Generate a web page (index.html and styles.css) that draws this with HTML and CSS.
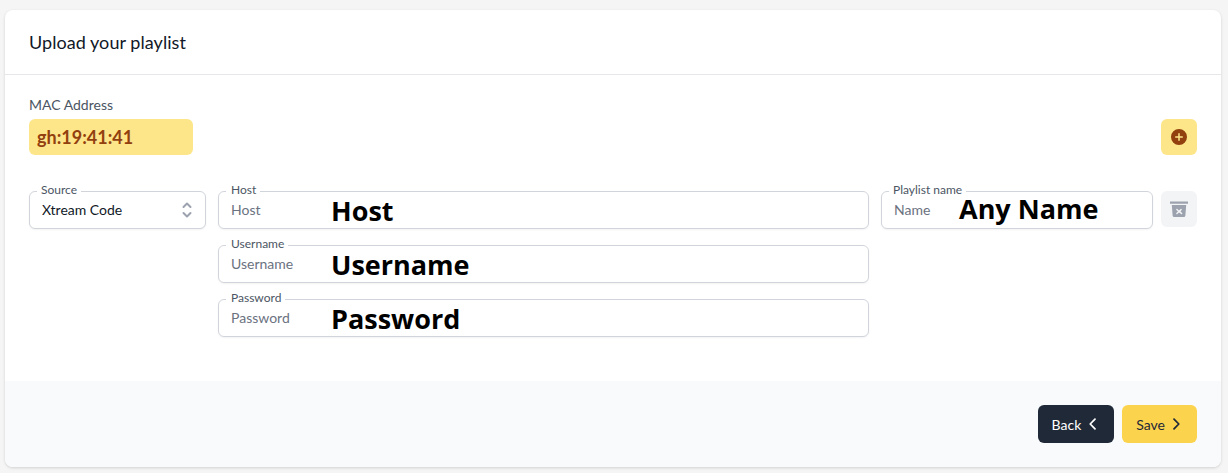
FILE: index.html
```html
<!DOCTYPE html>
<html lang="en">

<head>
    <meta charset="UTF-8">
    <meta name="viewport" content="width=device-width, initial-scale=1.0">
    <title>Upload your playlist</title>
    <link rel="stylesheet" href="styles.css">
</head>

<body>
    <div class="card">
        <div class="card-header">
            <h2 class="card-title">Upload your playlist</h2>
        </div>

        <div class="card-body">
            <div class="mac-label">MAC Address</div>
            <div class="mac-row">
                <div class="mac-value">gh:19:41:41</div>
                <button class="icon-btn add-btn" aria-label="Add playlist">
                    <svg width="20" height="20" viewBox="0 0 20 20" fill="currentColor">
                        <path fill-rule="evenodd" clip-rule="evenodd" d="M10 18a8 8 0 100-16 8 8 0 000 16zm.75-11.25a.75.75 0 00-1.5 0v2.5h-2.5a.75.75 0 000 1.5h2.5v2.5a.75.75 0 001.5 0v-2.5h2.5a.75.75 0 000-1.5h-2.5v-2.5z" />
                    </svg>
                </button>
            </div>

            <div class="playlist-row">
                <div class="field source-field">
                    <span class="field-label">Source</span>
                    <select class="field-select">
                        <option>Xtream Code</option>
                    </select>
                    <svg class="select-arrows" width="20" height="20" viewBox="0 0 20 20" fill="none" stroke="currentColor" stroke-width="2" stroke-linecap="round" stroke-linejoin="round">
                        <path d="M6.5 7 10 3.5 13.5 7" />
                        <path d="M6.5 13 10 16.5 13.5 13" />
                    </svg>
                </div>

                <div class="credentials">
                    <div class="field">
                        <span class="field-label">Host</span>
                        <input class="field-input" placeholder="Host">
                        <span class="note">Host</span>
                    </div>
                    <div class="field">
                        <span class="field-label">Username</span>
                        <input class="field-input" placeholder="Username">
                        <span class="note">Username</span>
                    </div>
                    <div class="field">
                        <span class="field-label">Password</span>
                        <input class="field-input" placeholder="Password">
                        <span class="note">Password</span>
                    </div>
                </div>

                <div class="field name-field">
                    <span class="field-label">Playlist name</span>
                    <input class="field-input" placeholder="Name">
                    <span class="note name-note">Any Name</span>
                </div>

                <button class="icon-btn trash-btn" aria-label="Remove playlist">
                    <svg width="20" height="20" viewBox="0 0 20 20" fill="currentColor">
                        <path d="M1 2.5h18v2.2H1z" />
                        <path fill-rule="evenodd" clip-rule="evenodd" d="M2.8 6h14.4l-.8 10.4a1.7 1.7 0 01-1.7 1.6H5.3a1.7 1.7 0 01-1.7-1.6L2.8 6zm4.6 3.9a.7.7 0 011 0l1.6 1.6 1.6-1.6a.7.7 0 111 1L11.500 12.500l1.600 1.600a.7.7 0 11-1 1L10 13.500l-1.600 1.600a.7.7 0 01-1-1l1.600-1.600-1.600-1.600a.7.7 0 010-1z" />
                    </svg>
                </button>
            </div>
        </div>

        <div class="card-footer">
            <button class="btn back-btn">Back
                <svg width="16" height="16" viewBox="0 0 20 20" fill="none" stroke="currentColor" stroke-width="2.2" stroke-linecap="round" stroke-linejoin="round">
                    <path d="M12.5 4 6.500 10l6 6" />
                </svg>
            </button>
            <button class="btn save-btn">Save
                <svg width="16" height="16" viewBox="0 0 20 20" fill="none" stroke="currentColor" stroke-width="2.2" stroke-linecap="round" stroke-linejoin="round">
                    <path d="M7.500 4l6 6-6 6" />
                </svg>
            </button>
        </div>
    </div>
</body>

</html>
```

FILE: styles.css
```css
* {
    box-sizing: border-box;
}

body {
    font-family: "Lato", "Noto Sans", sans-serif;
    background-color: #f5f5f5;
    margin: 0;
    padding: 10px 7px 6px 5px;
    color: #1f2937;
}

button,
input,
select {
    font-family: inherit;
}

.card {
    background-color: #fff;
    border-radius: 8px;
    box-shadow: 0 1px 3px rgba(0, 0, 0, 0.15);
    overflow: hidden;
}

.card-header {
    height: 65px;
    padding: 0 24px;
    display: flex;
    align-items: center;
    border-bottom: 1px solid #e5e7eb;
}

.card-title {
    margin: 0;
    font-size: 18px;
    font-weight: 400;
    letter-spacing: 0.05px;
    color: #111827;
}

.card-body {
    height: 306px;
    padding: 21px 24px 0;
}

.mac-label {
    font-size: 14px;
    line-height: 18px;
    color: #4b5563;
    margin-bottom: 5px;
}

.mac-row {
    display: flex;
    justify-content: space-between;
    margin-bottom: 36px;
}

.mac-value {
    width: 164px;
    height: 36px;
    padding: 0 8px;
    display: flex;
    align-items: center;
    border-radius: 6px;
    background-color: #fde68a;
    color: #92400e;
    font-size: 18px;
    font-weight: 700;
}

.icon-btn {
    width: 36px;
    height: 36px;
    padding: 0;
    border: none;
    border-radius: 6px;
    display: flex;
    align-items: center;
    justify-content: center;
    flex-shrink: 0;
}

.add-btn {
    background-color: #fde68a;
    color: #92400e;
}

.trash-btn {
    background-color: #f3f4f6;
    color: #9ca3af;
    margin-left: -4px;
}

.playlist-row {
    display: flex;
    align-items: flex-start;
    gap: 12px;
}

.credentials {
    width: 651px;
    display: flex;
    flex-direction: column;
    gap: 16px;
}

.credentials .field-label {
    padding-left: 5px;
}

.field {
    position: relative;
    height: 38px;
    border: 1px solid #d1d5db;
    border-radius: 6px;
    background-color: #fff;
    box-shadow: 0 1px 2px rgba(0, 0, 0, 0.05);
}

.source-field {
    width: 177px;
    flex-shrink: 0;
}

.name-field {
    width: 272px;
    flex-shrink: 0;
}

.field-label {
    position: absolute;
    left: 7px;
    top: -9px;
    padding: 0 4px;
    background-color: #fff;
    font-size: 12px;
    line-height: 14px;
    color: #4b5563;
}

.field-input,
.field-select {
    width: 100%;
    height: 100%;
    border: none;
    outline: none;
    background: transparent;
    padding: 0 12px 2px;
    font-size: 14px;
    color: #111827;
}

.field-select {
    appearance: none;
}

.field-input::placeholder {
    color: #6b7280;
    opacity: 1;
}

.select-arrows {
    position: absolute;
    right: 8px;
    top: 8px;
    color: #9ca3af;
    pointer-events: none;
}

.note {
    position: absolute;
    left: 112px;
    top: 1px;
    font-family: "Open Sans", sans-serif;
    font-size: 27px;
    line-height: 36px;
    font-weight: 700;
    color: #000;
    pointer-events: none;
}

.name-note {
    left: 77px;
    top: -1px;
}

.card-footer {
    height: 86px;
    padding: 0 24px;
    display: flex;
    align-items: center;
    justify-content: flex-end;
    gap: 8px;
    background-color: #f9fafb;
}

.btn {
    height: 38px;
    border: none;
    border-radius: 6px;
    padding: 0 13px 0 14px;
    display: flex;
    align-items: center;
    gap: 3px;
    font-size: 14px;
    cursor: pointer;
}

.back-btn {
    gap: 4px;
    background-color: #1f2937;
    color: #fff;
}

.save-btn {
    background-color: #fcd34d;
    color: #1f2937;
}
```
